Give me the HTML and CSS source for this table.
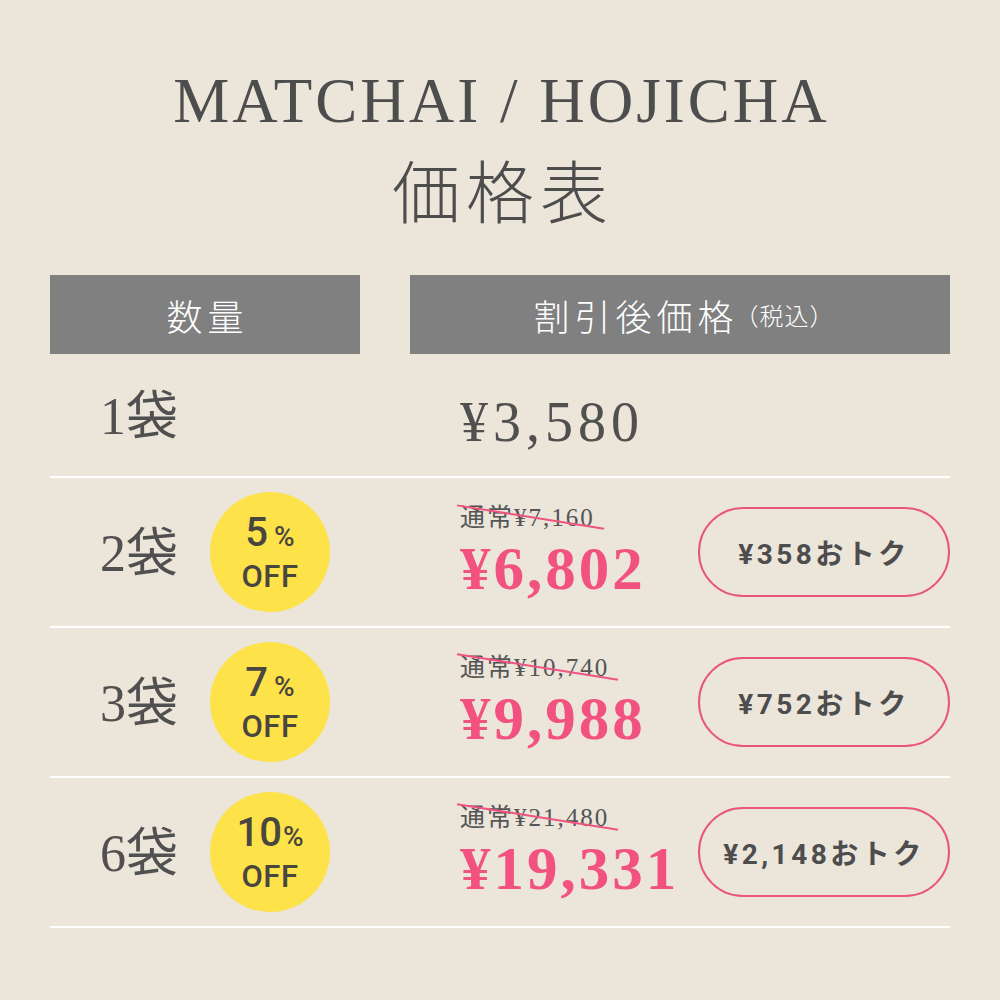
FILE: index.html
```html
<!DOCTYPE html>
<html lang="ja">
<head>
<meta charset="utf-8">
<title>MATCHAI / HOJICHA 価格表</title>
<link rel="stylesheet" href="styles.css">
</head>
<body>
<main class="page">
  <header class="title">
    <h1 class="title-en">MATCHAI / HOJICHA</h1>
    <p class="title-ja">価格表</p>
  </header>

  <div class="table-head">
    <div class="head-cell">数量</div>
    <div class="head-cell">割引後価格<span class="head-small">（税込）</span></div>
  </div>

  <div class="row row-single">
    <div class="qty-cell"><span class="qty">1袋</span></div>
    <div class="price-cell"><span class="price-plain">¥3,580</span></div>
  </div>

  <div class="row">
    <div class="qty-cell">
      <span class="qty">2袋</span>
      <span class="badge"><span class="badge-pct"><span class="num">5</span><span class="pct">%</span></span><span class="badge-off">OFF</span></span>
    </div>
    <div class="price-cell">
      <div class="price-stack">
        <span class="old">通常¥7,160</span>
        <span class="new">¥6,802</span>
      </div>
      <span class="pill">¥358おトク</span>
    </div>
  </div>

  <div class="row">
    <div class="qty-cell">
      <span class="qty">3袋</span>
      <span class="badge"><span class="badge-pct"><span class="num">7</span><span class="pct">%</span></span><span class="badge-off">OFF</span></span>
    </div>
    <div class="price-cell">
      <div class="price-stack">
        <span class="old">通常¥10,740</span>
        <span class="new">¥9,988</span>
      </div>
      <span class="pill">¥752おトク</span>
    </div>
  </div>

  <div class="row">
    <div class="qty-cell">
      <span class="qty">6袋</span>
      <span class="badge"><span class="badge-pct"><span class="num">10</span><span class="pct pct-tight">%</span></span><span class="badge-off">OFF</span></span>
    </div>
    <div class="price-cell">
      <div class="price-stack">
        <span class="old">通常¥21,480</span>
        <span class="new">¥19,331</span>
      </div>
      <span class="pill">¥2,148おトク</span>
    </div>
  </div>
</main>
</body>
</html>
```

FILE: styles.css
```css
html, body {
  margin: 0;
  padding: 0;
}
body {
  background: #ebe5da;
  color: #4d4d4d;
  font-family: "Liberation Serif", "Noto Sans CJK JP", serif;
  width: 1000px;
  height: 1000px;
  overflow: hidden;
}
.page {
  padding: 0 50px;
}
.title {
  text-align: center;
  padding-top: 66px;
}
.title-en {
  margin: 0;
  font-family: "Liberation Serif", serif;
  font-weight: 400;
  font-size: 63px;
  line-height: 70px;
  letter-spacing: 3px;
  color: #4d4d4d;
  padding-left: 3px;
}
.title-ja {
  margin: 0;
  margin-top: 15px;
  font-family: "Noto Sans CJK JP", sans-serif;
  font-weight: 300;
  font-size: 68px;
  line-height: 76px;
  letter-spacing: 6px;
  color: #4d4d4d;
  padding-left: 6px;
}
.table-head {
  margin-top: 48px;
  display: grid;
  grid-template-columns: 310px 540px;
  column-gap: 50px;
}
.head-cell {
  background: #808080;
  color: #fff;
  height: 79px;
  display: flex;
  align-items: center;
  justify-content: center;
  font-family: "Noto Sans CJK JP", sans-serif;
  font-weight: 300;
  font-size: 36px;
  letter-spacing: 5px;
}
.head-cell:first-child {
  padding-left: 5px;
}
.head-cell:last-child {
  padding-left: 8px;
}
.head-small {
  font-size: 24px;
  letter-spacing: 1px;
  margin-left: -4px;
}
.row {
  display: grid;
  grid-template-columns: 360px 540px;
  height: 148px;
  border-bottom: 2px solid #ffffff;
}
.row-single {
  height: 122px;
}
.qty-cell {
  display: flex;
  align-items: center;
  padding-left: 50px;
  gap: 28px;
}
.qty {
  font-size: 52px;
  line-height: 1;
  color: #505050;
  width: 82px;
  white-space: nowrap;
}
.row-single .qty {
  margin-top: 12px;
}
.row .qty {
  margin-top: 4px;
}
.price-cell {
  display: flex;
  align-items: center;
  padding-left: 50px;
  padding-top: 2px;
}
.price-plain {
  font-size: 56px;
  letter-spacing: 5px;
  line-height: 1;
  color: #505050;
  margin-top: 12px;
}
.badge {
  width: 120px;
  height: 120px;
  border-radius: 50%;
  background: #fde249;
  display: flex;
  flex-direction: column;
  align-items: center;
  justify-content: center;
  font-family: "Roboto", "Noto Sans", sans-serif;
  color: #48463e;
}
.badge-pct {
  display: flex;
  align-items: baseline;
  line-height: 1;
  height: 40px;
}
.num {
  font-size: 40px;
  line-height: 40px;
  font-weight: 500;
}
.pct {
  font-size: 28px;
  line-height: 28px;
  font-weight: 500;
  margin-left: 6px;
}
.pct-tight {
  margin-left: 1px;
}
.badge-off {
  font-size: 31px;
  font-weight: 500;
  line-height: 31px;
  margin-top: 8px;
  letter-spacing: 0.5px;
}
.price-stack {
  display: flex;
  flex-direction: column;
  align-items: flex-start;
}
.old {
  position: relative;
  font-size: 25px;
  line-height: 26px;
  color: #555;
  letter-spacing: 2px;
}
.old::after {
  content: "";
  position: absolute;
  left: -4px;
  right: -10px;
  top: 11px;
  height: 2px;
  background: #ef5480;
  transform: rotate(9deg);
  transform-origin: center;
}
.new {
  font-size: 61px;
  font-weight: 700;
  line-height: 64px;
  color: #f2527f;
  letter-spacing: 3px;
  margin-top: 6px;
}
.pill {
  margin-left: auto;
  width: 248px;
  height: 86px;
  border: 2px solid #e9557c;
  border-radius: 45px;
  display: flex;
  align-items: center;
  justify-content: center;
  font-family: "Roboto", "Noto Sans CJK JP", sans-serif;
  font-weight: 700;
  font-size: 28px;
  letter-spacing: 3.5px;
  color: #4d4d4d;
  margin-top: -2px;
}
```
